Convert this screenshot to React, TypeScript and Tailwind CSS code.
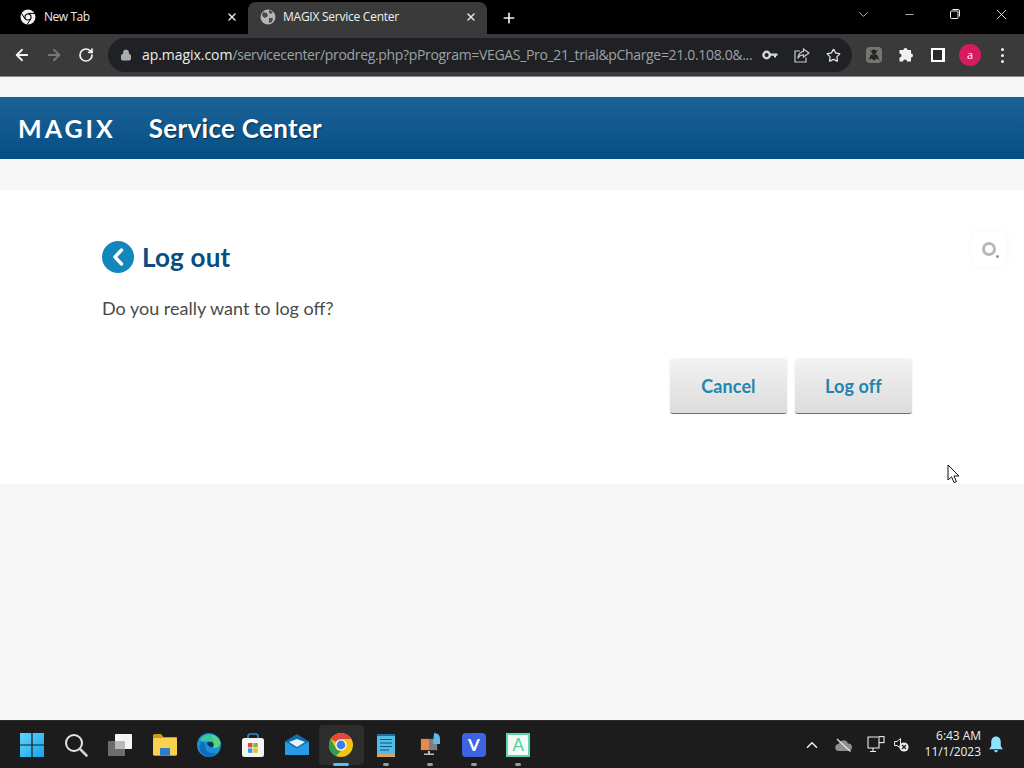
import { ArrowLeft, ArrowRight, RotateCw, Lock, Star, X, Plus, ChevronDown, Minus, ChevronUp } from 'lucide-react';

const UI = "font-['Open_Sans',sans-serif]";
const BRAND = "font-['Lato',sans-serif]";

function ChromeMono() {
    return (
        <svg width="16" height="16" viewBox="0 0 16 16">
            <circle cx="8" cy="8" r="7.5" fill="#f1f1f1" />
            <circle cx="8" cy="8" r="3.6" fill="#000" />
            <circle cx="8" cy="8" r="2.5" fill="#f1f1f1" />
            <path d="M8 4.4 H15 M5 10 L1.6 4.4 M10.8 10.2 L7 15.5" stroke="#000" strokeWidth="1" />
        </svg>
    );
}

function GlobeIcon() {
    return (
        <svg width="16" height="16" viewBox="0 0 16 16">
            <circle cx="8" cy="8" r="7.5" fill="#b5b6b8" />
            <path d="M3 3 L7 4 L8 7 L5 9 L2 7 Z M9 9 L13 9 L12 13 L9 14 Z M9 1 L13 3 L11 5 L9 4 Z" fill="#4a4b4e" />
        </svg>
    );
}

function KeyIcon() {
    return (
        <svg width="16" height="10" viewBox="0 0 16 10">
            <circle cx="4.6" cy="5" r="3.2" fill="none" stroke="#d6d7d9" strokeWidth="2.4" />
            <path d="M8 3.6 H15.5 V5.8 H14 V7.6 H12 V5.8 H8 Z" fill="#d6d7d9" />
        </svg>
    );
}

function ShareIcon() {
    return (
        <svg width="16" height="15" viewBox="0 0 16 15" fill="none" stroke="#c9cacc" strokeWidth="1.2">
            <path d="M6 3 H1 V14 H12 V9.5" />
            <path d="M9.5 1 L15 5 L9.5 9 V6.8 C7 6.8 5 8 4 10.5 C4 6.5 6.5 3.6 9.5 3.4 Z" />
        </svg>
    );
}

function RestoreIcon() {
    return (
        <svg width="10" height="10" viewBox="0 0 10 10" fill="none" stroke="#f2f2f2" strokeWidth="1">
            <rect x="0.5" y="2" width="7.5" height="7.5" rx="1" />
            <path d="M2.5 0.5 H8 Q9.5 0.5 9.5 2 V7.5" />
        </svg>
    );
}

function ExtensionAvatar() {
    return (
        <div className="w-4 h-4 rounded-sm bg-[#77756f] flex items-center justify-center">
            <svg width="14" height="14" viewBox="0 0 14 14" fill="#262524">
                <circle cx="7" cy="4" r="2.4" />
                <path d="M4 6.5 H10 L12.5 12 L9.6 10.6 L7 12.5 L4.4 10.6 L1.5 12 Z" />
                <path d="M3 2 L5 4 M11 2 L9 4" stroke="#262524" />
            </svg>
        </div>
    );
}

function PuzzleIcon() {
    return (
        <svg width="16" height="16" viewBox="0 0 16 16">
            <path d="M5.5 3 A2 2 0 0 1 9.5 3 H13 V6.4 A2 2 0 0 1 13 10.4 V14.5 H9 A2 2 0 0 0 5 14.5 H1.5 V10.6 A2 2 0 0 0 1.5 6.6 V3 Z" fill="#f2f2f2" />
        </svg>
    );
}

function WinLogo() {
    return (
        <svg width="24" height="24" viewBox="0 0 24 24">
            <defs>
                <linearGradient id="win" x1="0" y1="0" x2="1" y2="1">
                    <stop offset="0" stopColor="#5cd6fb" />
                    <stop offset="1" stopColor="#1aa3ec" />
                </linearGradient>
            </defs>
            <path d="M0 0 H11.4 V11.4 H0 Z M12.6 0 H24 V11.4 H12.6 Z M0 12.6 H11.4 V24 H0 Z M12.6 12.6 H24 V24 H12.6 Z" fill="url(#win)" />
        </svg>
    );
}

function SearchIcon() {
    return (
        <svg width="24" height="24" viewBox="0 0 24 24" fill="none">
            <circle cx="10" cy="10" r="8" stroke="#e6e6e6" strokeWidth="2" />
            <path d="M16 16 L22.5 22.5" stroke="#d0d0d0" strokeWidth="2.6" strokeLinecap="round" />
        </svg>
    );
}

function TaskView() {
    return (
        <svg width="24" height="22" viewBox="0 0 24 22">
            <rect x="7" y="0" width="17" height="15" rx="1" fill="#f4f4f4" />
            <rect x="0" y="7" width="17" height="15" rx="1" fill="#6d6d6d" />
            <rect x="7" y="7" width="10" height="8" fill="#b9b9b9" />
        </svg>
    );
}

function Explorer() {
    return (
        <svg width="24" height="22" viewBox="0 0 24 22">
            <path d="M0 1.5 Q0 0 1.5 0 H8 L10.5 3 H24 V20 Q24 21.5 22.5 21.5 H1.5 Q0 21.5 0 20 Z" fill="#c99a1c" />
            <rect x="0" y="4" width="24" height="17.5" rx="1.5" fill="#fbd24f" />
            <path d="M7 15 Q7 14 8 14 H16 Q17 14 17 15 V21.5 H7 Z" fill="#2b7fc7" />
        </svg>
    );
}

function Edge() {
    return (
        <svg width="24" height="24" viewBox="0 0 24 24">
            <circle cx="12" cy="12" r="12" fill="#1a8fd8" />
            <path d="M3 7 C6 0 19 -1 23 9 C24 13 20 16 15.5 14.5 C18 12 16 8 12 8 C8 8 5 9 3 7 Z" fill="#35c9a0" />
            <path d="M14 2 C19 2 23 6 23.5 10 C23.5 13 20 15.5 16.5 14.5 C18 11 17 6 14 2 Z" fill="#57d67c" />
            <path d="M8.5 14 C8.5 18.5 13 22 19.5 19.5 C17 23 12 24.5 8 22.5 C3 20 1 14 4 9.5 C5.5 8 8.5 10 8.5 14 Z" fill="#136bb8" />
            <path d="M14 9 C16.5 9 17.5 12.5 15.5 14.5 C12 14 10 12 10 10 C11 9.4 12.4 9 14 9 Z" fill="#10315e" />
        </svg>
    );
}

function Store() {
    return (
        <svg width="24" height="24" viewBox="0 0 24 24">
            <path d="M7 6 V3.5 Q7 1 9.5 1 H14.5 Q17 1 17 3.5 V6" fill="none" stroke="#2b8bc9" strokeWidth="1.6" />
            <rect x="1" y="5" width="22" height="19" rx="2.5" fill="#f4f4f4" />
            <rect x="7" y="10" width="4.4" height="4.4" fill="#e2492f" />
            <rect x="12.4" y="10" width="4.4" height="4.4" fill="#7dbb3a" />
            <rect x="7" y="15.4" width="4.4" height="4.4" fill="#2b9fe0" />
            <rect x="12.4" y="15.4" width="4.4" height="4.4" fill="#f6b91f" />
        </svg>
    );
}

function Mail() {
    return (
        <svg width="24" height="21" viewBox="0 0 24 21">
            <path d="M0 7.5 L12 0 L24 7.5 V21 H0 Z" fill="#0f6cb2" />
            <path d="M4 8 L12 5 L20 8 L12 13 Z" fill="#e6f4fc" />
            <path d="M0 7.5 L12 14.5 L24 7.5 V21 H0 Z" fill="#279ce6" />
        </svg>
    );
}

function ChromeColor() {
    return (
        <svg width="24" height="24" viewBox="0 0 24 24">
            <circle cx="12" cy="12" r="12" fill="#f2c40f" />
            <path d="M12 0 A12 12 0 0 1 22.4 6 H12 A6 6 0 0 0 6.8 9 L1.6 6 A12 12 0 0 1 12 0 Z" fill="#dd4b3e" />
            <path d="M1.6 6 L6.8 15 A6 6 0 0 0 12 18 L6.8 23 A12 12 0 0 1 1.6 6 Z" fill="#2f9e4f" />
            <circle cx="12" cy="12" r="5.6" fill="#fff" />
            <circle cx="12" cy="12" r="4.4" fill="#3a7fe8" />
        </svg>
    );
}

function Notepad() {
    return (
        <svg width="18" height="24" viewBox="0 0 18 24">
            <rect x="0" y="1" width="18" height="23" rx="1" fill="#4fbde8" />
            <path d="M0 1 H18 V3 H0 Z" fill="#1e6f9f" />
            <path d="M3 6.5 H15 M3 10 H15 M3 13.5 H15 M3 17 H12" stroke="#12557d" strokeWidth="1.2" />
            <rect x="0" y="21" width="18" height="3" fill="#d9a565" />
        </svg>
    );
}

function VegasTool() {
    return (
        <svg width="22" height="24" viewBox="0 0 22 24">
            <rect x="1" y="5" width="18" height="13" rx="1" fill="#2e2a28" />
            <rect x="2" y="6" width="8" height="11" fill="#e58a4c" />
            <rect x="10" y="6" width="8" height="11" fill="#77808a" />
            <path d="M15 0 Q21 0 21 6 V11 H14 Z" fill="#5db9e6" />
            <path d="M9 18 H11 V20.5 H15 V22 H5 V20.5 H9 Z" fill="#bdbdbd" />
        </svg>
    );
}

function AppTile({ letter, className }: { letter: string; className: string }) {
    return <div className={`w-6 h-6 flex items-center justify-center text-[17px] font-bold ${BRAND} ${className}`}>{letter}</div>;
}

function NetworkIcon() {
    return (
        <svg width="18" height="17" viewBox="0 0 18 17" fill="none" stroke="#ededed" strokeWidth="1.1">
            <path d="M11 1 H1 V12 H12 V7" />
            <path d="M6 12 V15.5 M3 15.5 H9" />
            <rect x="12" y="0.6" width="5" height="6" />
        </svg>
    );
}

function MutedIcon() {
    return (
        <svg width="15" height="15" viewBox="0 0 15 15">
            <path d="M0.6 4.5 H3 L6.5 1.5 V11 L3 8.5 H0.6 Z" fill="none" stroke="#ededed" strokeWidth="1" />
            <circle cx="10" cy="10" r="4.6" fill="#ededed" />
            <path d="M8 8 L12 12 M12 8 L8 12" stroke="#1c1c1c" strokeWidth="1.2" />
        </svg>
    );
}

function CloudOff() {
    return (
        <svg width="17" height="14" viewBox="0 0 17 14">
            <path d="M4 13 A3.5 3.5 0 0 1 3.6 6 A5 5 0 0 1 13 5.4 A3.8 3.8 0 0 1 13.4 13 Z" fill="#8e8e8e" />
            <path d="M2 1 L15.5 13.5" stroke="#e6e6e6" strokeWidth="1.2" />
        </svg>
    );
}

function Bell() {
    return (
        <svg width="16" height="17" viewBox="0 0 14 16">
            <path d="M7 0.5 C10 0.5 11.5 3 11.5 6 V9.5 L13.5 12.5 H0.5 L2.5 9.5 V6 C2.5 3 4 0.5 7 0.5 Z" fill="#8fe3fb" />
            <path d="M5 13.5 H9 Q8.5 15.5 7 15.5 Q5.5 15.5 5 13.5 Z" fill="#8fe3fb" />
        </svg>
    );
}

function PageButton({ label }: { label: string }) {
    return (
        <button className={`w-[117px] h-[55px] rounded-[3px] border-b border-b-[#6f6f6f] bg-gradient-to-b from-[#f2f2f3] to-[#dcdcdd] text-[#1f86ad] text-[18px] font-bold tracking-[0.1px] shadow-[0_0_3px_rgba(0,0,0,0.08)] ${BRAND}`}>
            {label}
        </button>
    );
}

const taskIcons = [
    { el: <WinLogo />, dot: false },
    { el: <SearchIcon />, dot: false },
    { el: <TaskView />, dot: false },
    { el: <Explorer />, dot: false },
    { el: <Edge />, dot: false },
    { el: <Store />, dot: false },
    { el: <Mail />, dot: false },
    { el: <ChromeColor />, dot: false, active: true },
    { el: <Notepad />, dot: true },
    { el: <VegasTool />, dot: true },
    { el: <AppTile letter="V" className="bg-[#3f63e0] text-white rounded-sm" />, dot: true },
    { el: <AppTile letter="A" className="bg-[#f3fbf6] text-[#4fd0a0] border-2 border-[#5ed6a8] font-normal" />, dot: true },
];

export default function App() {
    return (
        <div className={`relative w-[1024px] h-[768px] flex flex-col overflow-hidden bg-[#f6f6f6] ${UI}`}>
            {/* tab strip */}
            <div className="h-[34px] bg-black flex items-end text-[12px] text-[#e8eaed]">
                <div className="w-[248px] h-[32px] flex items-center pl-[20px] pr-[10px] pb-[2px]">
                    <ChromeMono />
                    <span className="ml-[8px] flex-1 tracking-[-0.45px]">New Tab</span>
                    <X size={12} strokeWidth={3} color="#e8e8e8" />
                </div>
                <div className="w-[239px] h-[32px] rounded-t-lg bg-[#3a3a3b] flex items-center pl-[12px] pr-[10px] pb-[2px]">
                    <GlobeIcon />
                    <span className="ml-[7px] flex-1 tracking-[-0.25px] text-[#f0f0f0]">MAGIX Service Center</span>
                    <X size={12} strokeWidth={3} color="#e8e8e8" />
                </div>
                <div className="ml-[14px] h-[32px] flex items-center">
                    <Plus size={16} strokeWidth={2.5} color="#f2f2f2" />
                </div>
                <div className="flex-1" />
                <div className="h-[34px] flex items-center pb-[6px]">
                    <div className="w-[46px] flex justify-center"><ChevronDown size={15} strokeWidth={1.2} color="#f2f2f2" /></div>
                    <div className="w-[46px] flex justify-center"><Minus size={13} strokeWidth={1.3} color="#f2f2f2" /></div>
                    <div className="w-[46px] flex justify-center"><RestoreIcon /></div>
                    <div className="w-[46px] flex justify-center"><X size={17} strokeWidth={1.2} color="#f2f2f2" /></div>
                </div>
            </div>

            {/* toolbar */}
            <div className="h-[43px] bg-[#3a3a3b] border-b border-b-[#8c8d8f] flex items-center pl-[13px]">
                <ArrowLeft size={18} strokeWidth={2.4} color="#f2f2f2" />
                <ArrowRight size={18} strokeWidth={2.4} color="#77787a" className="ml-[14px]" />
                <RotateCw size={16} strokeWidth={2.6} color="#f2f2f2" className="ml-[15px]" />
                <div className="ml-[14px] w-[744px] h-[34px] rounded-full bg-[#202124] flex items-center pl-[12px] pr-[10px]">
                    <Lock size={12} fill="#a9abae" color="#a9abae" />
                    <span className="ml-[10px] w-[608px] pb-[1px] text-[14px] whitespace-nowrap text-[#9ea1a5] tracking-[-0.33px]">
                        <span className="text-[#eceded] tracking-[-0.05px]">ap.magix.com</span>/servicecenter/prodreg.php?pProgram=VEGAS_Pro_21_trial&amp;pCharge=21.0.108.0&amp;...
                    </span>
                    <div className="ml-[12px] flex items-center gap-[16px]">
                        <KeyIcon />
                        <ShareIcon />
                        <Star size={15} strokeWidth={2} color="#e3e3e3" />
                    </div>
                </div>
                <div className="ml-[14px] flex items-center">
                    <ExtensionAvatar />
                    <div className="ml-[16px]"><PuzzleIcon /></div>
                    <div className="ml-[17px] w-[14px] h-[14px] border-2 border-white border-r-[3px] bg-[#2b2b2c]" />
                    <div className="ml-[14px] w-[22px] h-[22px] rounded-full bg-[#d81b60] flex items-center justify-center text-[11px] text-white">a</div>
                    <div className="ml-[20px] flex flex-col gap-[3px]">
                        <div className="w-[3px] h-[3px] rounded-full bg-[#f0f0f0]" />
                        <div className="w-[3px] h-[3px] rounded-full bg-[#f0f0f0]" />
                        <div className="w-[3px] h-[3px] rounded-full bg-[#f0f0f0]" />
                    </div>
                </div>
            </div>

            {/* page */}
            <div className="flex-1 pt-[20px]">
                <div className="h-[62px] bg-gradient-to-b from-[#1b6299] to-[#044f85] flex items-center pl-[18px]">
                    <span className={`text-[25px] font-bold text-white tracking-[3px] leading-none ${BRAND}`}>MAGIX</span>
                    <span className={`ml-[33px] text-[26px] font-bold text-white tracking-[0.3px] [text-shadow:1px_1px_1px_rgba(0,0,0,0.5)] ${BRAND}`}>Service Center</span>
                </div>
                <div className="mt-[31px] h-[294px] bg-white pl-[102px] pr-[112px] pt-[51px]">
                    <div className="flex items-center gap-[8px] h-[32px]">
                        <div className="w-[32px] h-[32px] rounded-full bg-[#1286bd] flex items-center justify-center">
                            <svg width="12" height="18" viewBox="0 0 12 18" fill="none" stroke="#fff" strokeWidth="3.4" strokeLinecap="round" strokeLinejoin="round">
                                <path d="M9.5 2 L3 9 L9.5 16" />
                            </svg>
                        </div>
                        <h1 className={`text-[26px] font-bold tracking-[0.2px] text-[#064e80] ${BRAND}`}>Log out</h1>
                    </div>
                    <p className={`mt-[23px] text-[18px] leading-[24px] text-[#4a4a4a] ${BRAND}`}>Do you really want to log off?</p>
                    <div className="mt-[39px] flex justify-end gap-[8px]">
                        <PageButton label="Cancel" />
                        <PageButton label="Log off" />
                    </div>
                </div>
            </div>

            {/* taskbar */}
            <div className="h-[48px] bg-[#1c1c1c] border-t border-t-[#2c2c2c] flex items-center text-[12px] text-[#f0f0f0]">
                <div className="flex items-center pl-[10px]">
                    {taskIcons.map((t, i) => (
                        <div key={i} className={`relative w-[44.2px] h-[40px] flex items-center justify-center rounded ${t.active ? 'bg-[#2d2d2d]' : ''}`}>
                            {t.el}
                            {t.dot && <div className="absolute bottom-[-1px] w-[6px] h-[3px] rounded-full bg-[#9a9a9a]" />}
                            {t.active && <div className="absolute bottom-[-1px] w-[16px] h-[3px] rounded-full bg-[#4cc2ff]" />}
                        </div>
                    ))}
                </div>
                <div className="flex-1" />
                <ChevronUp size={18} strokeWidth={2} color="#f0f0f0" />
                <div className="ml-[14px]"><CloudOff /></div>
                <div className="ml-[15px]"><NetworkIcon /></div>
                <div className="ml-[9px]"><MutedIcon /></div>
                <div className="ml-[16px] text-right leading-[16px] text-[12px] tracking-[-0.05px] pb-[1px]">
                    <div>6:43 AM</div>
                    <div>11/1/2023</div>
                </div>
                <div className="ml-[7px] mr-[20px]"><Bell /></div>
            </div>

            {/* floating widget */}
            <div className="absolute left-[972px] top-[232px] w-[34px] h-[34px] rounded-lg bg-white shadow-[0_0_10px_rgba(0,0,0,0.04)] flex items-center justify-center">
                <div className="relative w-[14px] h-[14px] rounded-full border-[3px] border-[#b5b8bb]">
                    <div className="absolute right-[-6px] bottom-[-5px] w-[3px] h-[3px] rounded-full bg-[#8d9296]" />
                </div>
            </div>

            {/* mouse cursor */}
            <svg className="absolute left-[947px] top-[464px]" width="13" height="20" viewBox="0 0 13 20">
                <path d="M1 1 V16 L4.6 12.8 L7 18.6 L9.4 17.6 L7 12 H12 Z" fill="#fff" stroke="#111" strokeWidth="1" />
            </svg>
        </div>
    );
}
